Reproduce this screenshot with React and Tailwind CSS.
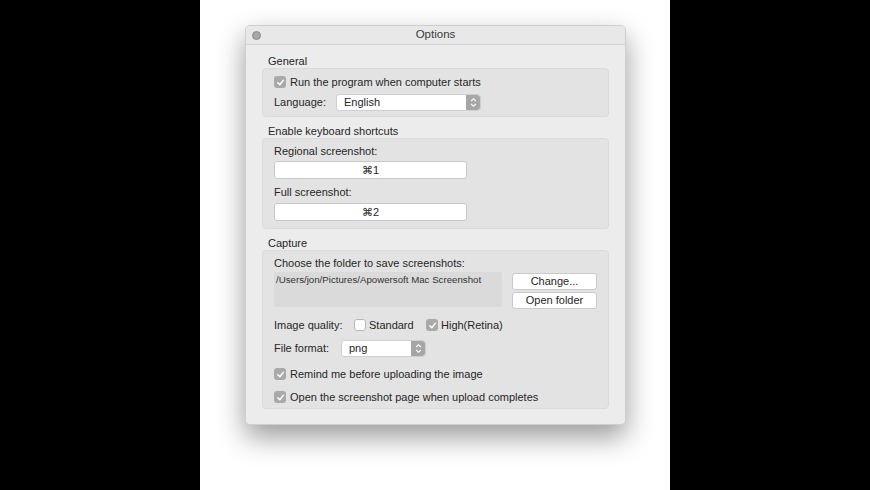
import React from 'react';

const Check = ({ checked }) => (
  <span
    className={
      'flex h-[12px] w-[12px] shrink-0 items-center justify-center rounded-[3px] ' +
      (checked ? 'bg-[#a9a9a9]' : 'border border-[#b9b9b9] bg-white')
    }
  >
    {checked && (
      <svg width="9" height="9" viewBox="0 0 10 10">
        <path d="M2 5.3 L4.2 7.5 L8.2 2.5" fill="none" stroke="#fff" strokeWidth="1.6" strokeLinecap="round" strokeLinejoin="round" />
      </svg>
    )}
  </span>
);

const Stepper = () => (
  <span className="flex h-full w-[14px] items-center justify-center rounded-r-[3px] bg-[#a6a6a6]">
    <svg width="7" height="11" viewBox="0 0 7 11">
      <path d="M1.2 4 L3.5 1.7 L5.8 4 M1.2 7 L3.5 9.3 L5.8 7" fill="none" stroke="#fff" strokeWidth="1.1" />
    </svg>
  </span>
);

const Select = ({ value, w }) => (
  <div className={'flex h-[17px] items-center rounded-[3px] border border-[#cfcfcf] bg-white ' + w}>
    <span className="flex-1 pl-[7px]">{value}</span>
    <Stepper />
  </div>
);

const Field = ({ value }) => (
  <div className="flex h-[18px] w-[193px] items-center justify-center rounded-[3px] border border-[#c8c8c8] bg-white">
    {value}
  </div>
);

const Btn = ({ children }) => (
  <div className="flex h-[17px] w-[85px] items-center justify-center rounded-[3px] border border-[#cacaca] bg-white">
    {children}
  </div>
);

const Box = ({ className, children }) => (
  <div className={'ml-[16px] mr-[16px] rounded-[4px] border border-[#dadada] bg-[#e3e3e3] ' + className}>
    {children}
  </div>
);

const Title = ({ children, className }) => (
  <div className={'ml-[22px] h-[14px] leading-[14px] ' + className}>{children}</div>
);

export default function App() {
  return (
    <div
      className="flex h-[490px] w-[870px] overflow-hidden bg-black text-[11px] text-[#262626]"
      style={{ fontFamily: '"Liberation Sans", Arial, sans-serif' }}
    >
      <div className="w-[200px]" />
      <div className="h-full w-[470px] bg-white pl-[45px] pt-[25px]">
        <div className="h-[400px] w-[381px] overflow-hidden rounded-[5px] border border-[#cfcfcf] bg-[#ececec] shadow-[0_12px_28px_rgba(0,0,0,0.4)]">
          <div className="relative flex h-[19px] items-center justify-center border-b border-[#d6d6d6] bg-[#e8e8e8] text-[11.5px] text-[#3a3a3a]">
            <span className="absolute left-[6px] top-[5px] h-[9px] w-[9px] rounded-full border border-[#8a8a8a] bg-[#a8a8a8]" />
            Options
          </div>

          <Title className="mt-[9px]">General</Title>
          <Box className="h-[49px] px-[11px] pt-[6px]">
            <div className="flex h-[14px] items-center gap-[4px]">
              <Check checked />
              <span>Run the program when computer starts</span>
            </div>
            <div className="mt-[5px] flex h-[17px] items-center">
              <span className="w-[62px]">Language:</span>
              <Select value="English" w="w-[145px]" />
            </div>
          </Box>

          <Title className="mt-[7px]">Enable keyboard shortcuts</Title>
          <Box className="h-[91px] px-[11px] pt-[5px]">
            <div className="h-[14px] leading-[14px]">Regional screenshot:</div>
            <div className="mt-[3px]"><Field value="⌘1" /></div>
            <div className="mt-[6px] h-[14px] leading-[14px]">Full screenshot:</div>
            <div className="mt-[4px]"><Field value="⌘2" /></div>
          </Box>

          <Title className="mt-[7px]">Capture</Title>
          <Box className="h-[159px] px-[11px] pt-[5px]">
            <div className="h-[14px] leading-[14px]">Choose the folder to save screenshots:</div>
            <div className="mt-[2px] flex items-start">
              <div className="h-[35px] w-[229px] rounded-[2px] bg-[#dadada] pl-[2px] pt-[1px] text-[9.7px] text-[#333]">
                /Users/jon/Pictures/Apowersoft Mac Screenshot
              </div>
              <div className="ml-[10px] flex flex-col gap-[2px] pt-[1px]">
                <Btn>Change...</Btn>
                <Btn>Open folder</Btn>
              </div>
            </div>
            <div className="mt-[8px] flex h-[16px] items-center">
              <span className="w-[80px]">Image quality:</span>
              <Check />
              <span className="ml-[3px] w-[57px]">Standard</span>
              <Check checked />
              <span className="ml-[3px]">High(Retina)</span>
            </div>
            <div className="mt-[6px] flex h-[18px] items-center">
              <span className="w-[67px]">File format:</span>
              <Select value="png" w="w-[85px]" />
            </div>
            <div className="mt-[10px] flex h-[14px] items-center gap-[4px]">
              <Check checked />
              <span>Remind me before uploading the image</span>
            </div>
            <div className="mt-[9px] flex h-[14px] items-center gap-[4px]">
              <Check checked />
              <span>Open the screenshot page when upload completes</span>
            </div>
          </Box>
        </div>
      </div>
      <div className="flex-1" />
    </div>
  );
}
